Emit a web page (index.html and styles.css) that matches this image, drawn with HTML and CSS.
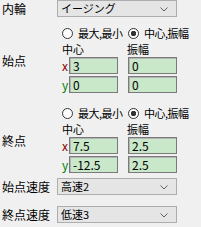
FILE: index.html
```html
<!DOCTYPE html>
<html lang="ja">
<head>
    <meta charset="UTF-8">
    <title>内輪</title>
    <link rel="stylesheet" href="styles.css">
</head>
<body>
    <div class="panel">
        <div class="row">
            <div class="label">内輪</div>
            <div class="combo">イージング<svg class="chev" width="8" height="5" viewBox="0 0 8 5"><polyline points="0.5,0.5 4,4 7.5,0.5" fill="none" stroke="#606060"/></svg></div>
        </div>

        <div class="group first">
            <div class="label">始点</div>
            <div class="fields">
                <div class="radios">
                    <label class="radio"><input type="radio" name="m1">最大,最小</label>
                    <label class="radio"><input type="radio" name="m1" checked>中心,振幅</label>
                </div>
                <div class="heads"><span class="h1">中心</span><span class="h2">振幅</span></div>
                <div class="line"><span class="axis ax">x</span><input type="text" value="3"><input type="text" value="0"></div>
                <div class="line"><span class="axis ay">y</span><input type="text" value="0"><input type="text" value="0"></div>
            </div>
        </div>

        <div class="group">
            <div class="label">終点</div>
            <div class="fields">
                <div class="radios">
                    <label class="radio"><input type="radio" name="m2">最大,最小</label>
                    <label class="radio"><input type="radio" name="m2" checked>中心,振幅</label>
                </div>
                <div class="heads"><span class="h1">中心</span><span class="h2">振幅</span></div>
                <div class="line"><span class="axis ax">x</span><input type="text" value="7.5"><input type="text" value="2.5"></div>
                <div class="line"><span class="axis ay">y</span><input type="text" value="-12.5"><input type="text" value="2.5"></div>
            </div>
        </div>

        <div class="row speed">
            <div class="label">始点速度</div>
            <div class="combo">高速2<svg class="chev" width="8" height="5" viewBox="0 0 8 5"><polyline points="0.5,0.5 4,4 7.5,0.5" fill="none" stroke="#606060"/></svg></div>
        </div>
        <div class="row speed2">
            <div class="label">終点速度</div>
            <div class="combo">低速3<svg class="chev" width="8" height="5" viewBox="0 0 8 5"><polyline points="0.5,0.5 4,4 7.5,0.5" fill="none" stroke="#606060"/></svg></div>
        </div>
    </div>
</body>
</html>
```

FILE: styles.css
```css
body {
    margin: 0;
    background-color: #f0f0f0;
    font-family: "Noto Sans CJK JP", "Noto Sans", sans-serif;
    font-size: 12px;
    color: #000;
}
.panel {
    width: 201px;
    height: 227px;
}
.row {
    display: flex;
    align-items: center;
    height: 17px;
}
.label {
    width: 55px;
    padding-left: 2px;
    flex-shrink: 0;
    line-height: 14px;
    white-space: nowrap;
}
.combo {
    position: relative;
    box-sizing: border-box;
    width: 120px;
    height: 17px;
    border: 1px solid #adadad;
    background-color: #e5e5e5;
    padding-left: 3px;
    line-height: 15px;
    font-size: 11px;
}
.chev {
    position: absolute;
    right: 8px;
    top: 6px;
}
.group {
    display: flex;
    align-items: center;
    margin-top: 11px;
}
.group.first {
    margin-top: 9px;
}
.fields {
    display: flex;
    flex-direction: column;
}
.radios {
    display: flex;
    height: 14px;
    align-items: center;
    padding-left: 5px;
}
.radio {
    display: flex;
    align-items: center;
    line-height: 14px;
    font-size: 11px;
    letter-spacing: -0.5px;
    white-space: nowrap;
}
.radio:first-child {
    width: 66px;
}
.radio input {
    appearance: none;
    box-sizing: border-box;
    flex-shrink: 0;
    width: 11px;
    height: 11px;
    margin: 0 5px 0 0;
    border: 1px solid #333;
    border-radius: 50%;
    background-color: #fff;
}
.radio input:checked {
    background: radial-gradient(circle, #333 2.5px, #fff 3px);
}
.heads {
    display: flex;
    height: 17px;
    align-items: center;
    font-size: 11px;
}
.h1 {
    margin-left: 5px;
    width: 65px;
}
.line {
    display: flex;
    align-items: center;
    height: 17px;
    margin-bottom: 2px;
}
.axis {
    width: 7px;
    margin-left: 5px;
    line-height: 12px;
}
.ax {
    color: #8b0000;
}
.ay {
    color: #008000;
}
.line input {
    box-sizing: border-box;
    width: 49px;
    height: 17px;
    margin: 0;
    padding: 0 0 0 3px;
    border: 1px solid #7a7a7a;
    box-shadow: inset 1px 1px 0 #b4b4b4;
    background-color: #c9e7c9;
    font-family: inherit;
    font-size: 12px;
    color: #000;
}
.line input + input {
    margin-left: 10px;
}
.speed {
    margin-top: 3px;
}
.speed2 {
    margin-top: 11px;
}
```
